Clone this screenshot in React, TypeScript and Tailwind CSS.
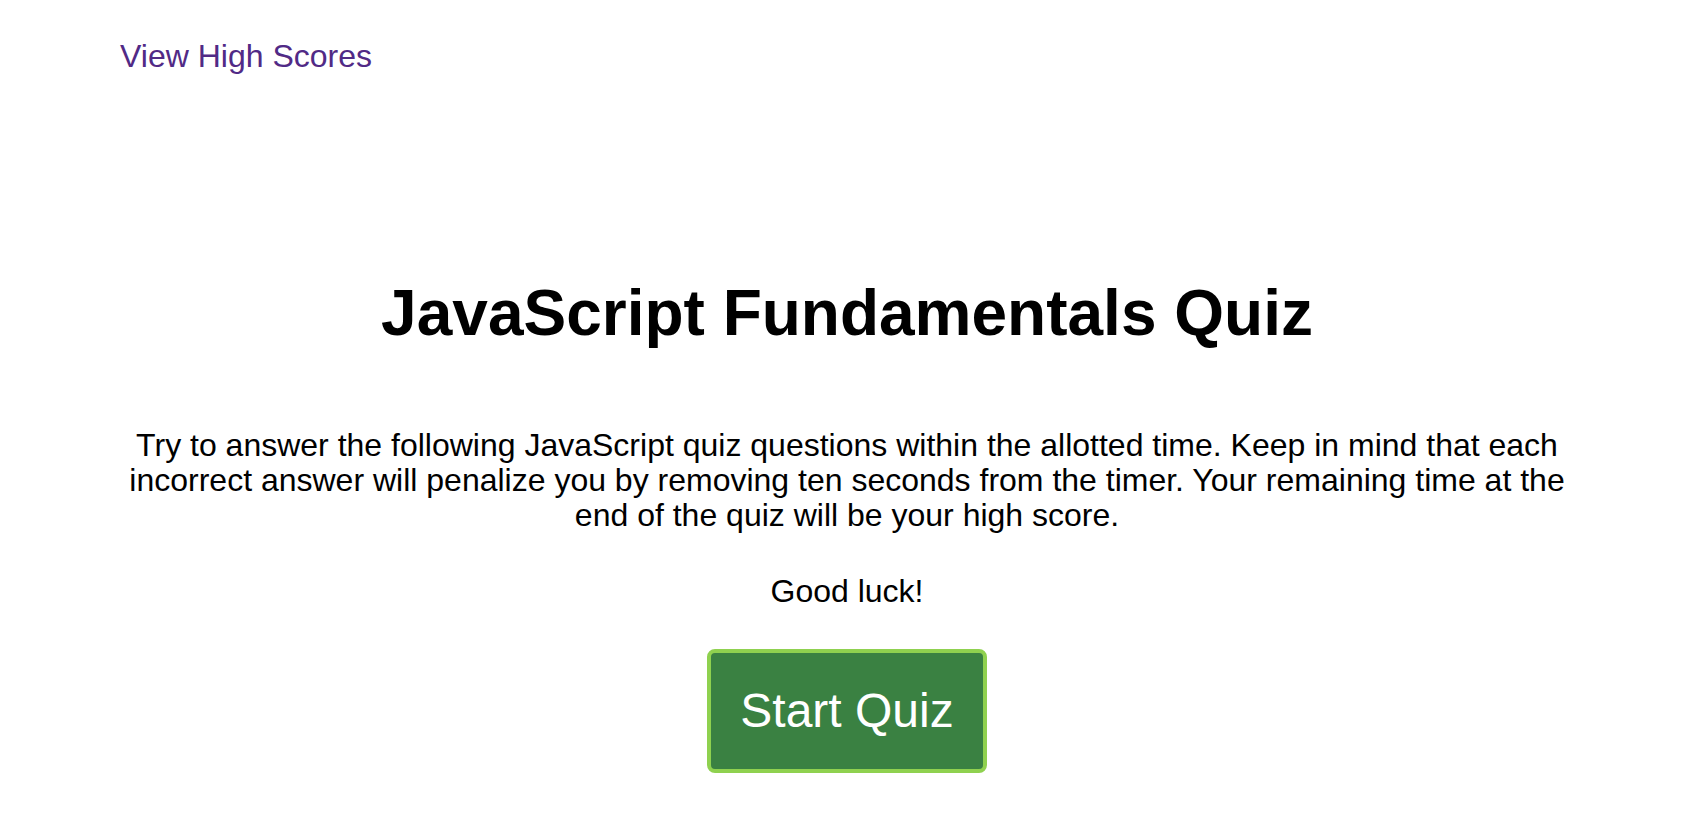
import React from "react";

export default function App() {
  return (
    <div
      className="min-h-[814px] w-full bg-white text-black px-[120px]"
      style={{ fontFamily: '"Liberation Sans", Arial, Helvetica, sans-serif' }}
    >
      <header className="pt-[38px]">
        <a
          href="#"
          className="text-[32px] leading-[37px] text-[#512a86] no-underline"
        >
          View High Scores
        </a>
      </header>
      <main className="flex flex-col items-center text-center">
        <h1 className="mt-[201px] text-[64px] leading-[74px] font-bold">
          JavaScript Fundamentals Quiz
        </h1>
        <p className="mt-[78px] text-[32px] leading-[35px]">
          Try to answer the following JavaScript quiz questions within the allotted time. Keep in mind that each
          incorrect answer will penalize you by removing ten seconds from the timer. Your remaining time at the
          end of the quiz will be your high score.
        </p>
        <p className="mt-[41px] text-[32px] leading-[35px]">Good luck!</p>
        <button className="mt-[40px] rounded-[8px] border-[4px] border-[#8fd14f] bg-[#3a8142] px-[29px] py-[30px] text-[48px] leading-[56px] text-white">
          Start Quiz
        </button>
      </main>
    </div>
  );
}
